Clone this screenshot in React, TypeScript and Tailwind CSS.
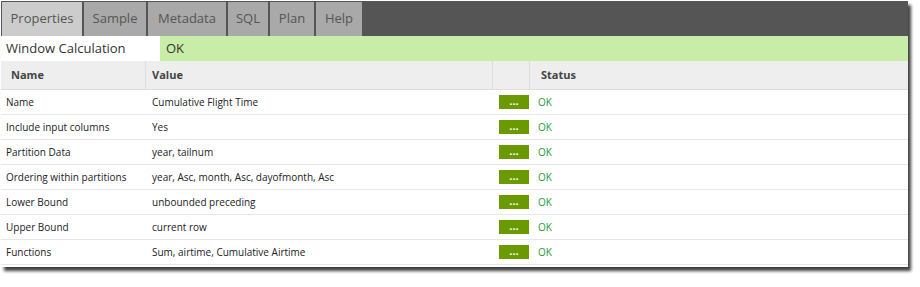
const tabs = [
  { label: "Properties", w: "w-[80px]", active: true },
  { label: "Sample", w: "w-[62px]" },
  { label: "Metadata", w: "w-[78px]" },
  { label: "SQL", w: "w-[40px]" },
  { label: "Plan", w: "w-[44px]" },
  { label: "Help", w: "w-[46px]" },
];

const rows = [
  ["Name", "Cumulative Flight Time"],
  ["Include input columns", "Yes"],
  ["Partition Data", "year, tailnum"],
  ["Ordering within partitions", "year, Asc, month, Asc, dayofmonth, Asc"],
  ["Lower Bound", "unbounded preceding"],
  ["Upper Bound", "current row"],
  ["Functions", "Sum, airtime, Cumulative Airtime"],
];

export default function App() {
  return (
    <div
      className="w-[920px] h-[287px] bg-white pt-[1px] pl-[1px]"
      style={{ fontFamily: '"Open Sans", "Noto Sans", sans-serif' }}
    >
      <div className="w-[907px] h-[266px] bg-white shadow-[3px_4px_3px_rgba(0,0,0,0.75)] overflow-hidden">
        {/* Tabs */}
        <div className="h-[35px] bg-[#555555] flex gap-[2px] pl-[1px] pt-[1px]">
          {tabs.map((t) => (
            <div
              key={t.label}
              className={`${t.w} flex items-center justify-center text-[13px] text-[#555] ${
                t.active ? "bg-[#cccccc]" : "bg-[#a9a9a9]"
              }`}
            >
              {t.label}
            </div>
          ))}
        </div>

        {/* Title */}
        <div className="h-[25px] flex text-[13px] text-[#333]">
          <div className="w-[159px] pl-[5px] flex items-center">Window Calculation</div>
          <div className="flex-1 bg-[#c8eda8] pl-[6px] flex items-center">OK</div>
        </div>

        {/* Header */}
        <div className="h-[29px] flex bg-[#eeeeee] border-b border-[#dddddd] text-[11px] font-bold text-[#444]">
          <div className="w-[145px] pl-[10px] flex items-center border-r border-[#dddddd]">Name</div>
          <div className="w-[347px] pl-[6px] flex items-center border-r border-[#dddddd]">Value</div>
          <div className="w-[37px] border-r border-[#dddddd]" />
          <div className="flex-1 pl-[11px] flex items-center">Status</div>
        </div>

        {/* Rows */}
        {rows.map(([name, value]) => (
          <div
            key={name}
            className="h-[25px] flex items-center border-b border-[#e6e6e6] text-[10px] text-[#222]"
          >
            <div className="w-[145px] pl-[5px]">{name}</div>
            <div className="w-[353px] pl-[6px]">{value}</div>
            <div className="w-[30px] h-[14px] bg-[#6a9a00] text-white font-bold text-[11px] leading-[12px] flex justify-center">
              ...
            </div>
            <div className="pl-[9px] text-[#1e9a3c]">OK</div>
          </div>
        ))}
      </div>
    </div>
  );
}
